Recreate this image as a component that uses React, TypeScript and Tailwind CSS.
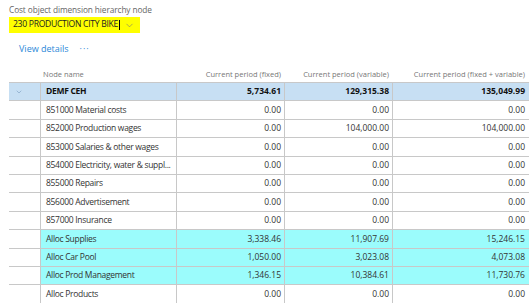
import { ChevronDown } from "lucide-react";

type Row = {
  name: string;
  fixed: string;
  variable: string;
  total: string;
  kind?: "parent" | "alloc";
};

const rows: Row[] = [
  { name: "DEMF CEH", fixed: "5,734.61", variable: "129,315.38", total: "135,049.99", kind: "parent" },
  { name: "851000 Material costs", fixed: "0.00", variable: "0.00", total: "0.00" },
  { name: "852000 Production wages", fixed: "0.00", variable: "104,000.00", total: "104,000.00" },
  { name: "853000 Salaries & other wages", fixed: "0.00", variable: "0.00", total: "0.00" },
  { name: "854000 Electricity, water & suppl...", fixed: "0.00", variable: "0.00", total: "0.00" },
  { name: "855000 Repairs", fixed: "0.00", variable: "0.00", total: "0.00" },
  { name: "856000 Advertisement", fixed: "0.00", variable: "0.00", total: "0.00" },
  { name: "857000 Insurance", fixed: "0.00", variable: "0.00", total: "0.00" },
  { name: "Alloc Supplies", fixed: "3,338.46", variable: "11,907.69", total: "15,246.15", kind: "alloc" },
  { name: "Alloc Car Pool", fixed: "1,050.00", variable: "3,023.08", total: "4,073.08", kind: "alloc" },
  { name: "Alloc Prod Management", fixed: "1,346.15", variable: "10,384.61", total: "11,730.76", kind: "alloc" },
  { name: "Alloc Products", fixed: "0.00", variable: "0.00", total: "0.00" },
];

const cols = "grid grid-cols-[31px_136px_108px_108px_137px]";

export default function App() {
  return (
    <div className="w-[529px] h-[303px] overflow-hidden bg-white pl-[9px] font-['Open_Sans',sans-serif] text-[#333]">
      {/* Hierarchy node picker */}
      <div className="pt-[5px] text-[8.3px] leading-[10px] tracking-[-0.1px] text-[#666]">Cost object dimension hierarchy node</div>
      <div className="mt-[2px] flex h-[16px] w-[131px] items-center justify-between bg-[#ffff00] pl-[4px] pr-[5px]">
        <span className="whitespace-nowrap text-[8.6px] leading-none tracking-[-0.3px] text-[#222]">
          230 PRODUCTION CITY BIKE<span className="ml-px inline-block h-[10px] w-px bg-black align-middle" />
        </span>
        <ChevronDown className="h-[11px] w-[11px] shrink-0 text-[#777]" strokeWidth={1.3} />
      </div>

      {/* Action bar */}
      <div className="mt-[10px] flex items-center gap-[11px] pl-[10px] text-[9px] leading-[12px] text-[#2b88d8]">
        <span>View details</span>
        <span className="tracking-[1px]">···</span>
      </div>

      {/* Grid */}
      <div className="mt-[12px]">
        <div className={`${cols} h-[15px] items-center text-[7.5px] text-[#777]`}>
          <div />
          <div className="pl-[3px]">Node name</div>
          <div className="pr-[3px] text-right">Current period (fixed)</div>
          <div className="pr-[3px] text-right">Current period (variable)</div>
          <div className="pr-[4px] text-right">Current period (fixed + variable)</div>
        </div>
        <div className="border-t border-[#c8c8c8]">
          {rows.map((r) => {
            const bg = r.kind === "parent" ? "bg-[#c7dff3]" : r.kind === "alloc" ? "bg-[#9bfcfc]" : "bg-white";
            const weight = r.kind === "parent" ? "font-bold text-[#111]" : "";
            return (
              <div key={r.name} className={`${cols} h-[18.4px] border-b border-[#c8c8c8] text-[8.5px] leading-none ${weight}`}>
                <div className={`flex items-center pl-[6px] ${r.kind === "parent" ? bg : "bg-white"}`}>
                  {r.kind === "parent" && <ChevronDown className="h-[8px] w-[8px] text-[#6a8fb5]" strokeWidth={1.5} />}
                </div>
                <div className={`flex items-center overflow-hidden whitespace-nowrap border-l border-[#c8c8c8] pl-[5px] tracking-[-0.3px] ${bg}`}>
                  {r.name}
                </div>
                <div className={`flex items-center justify-end border-l border-[#c8c8c8] pr-[3px] ${bg}`}>{r.fixed}</div>
                <div className={`flex items-center justify-end border-l border-[#c8c8c8] pr-[3px] ${bg}`}>{r.variable}</div>
                <div className={`flex items-center justify-end border-l border-[#c8c8c8] pr-[4px] ${bg}`}>{r.total}</div>
              </div>
            );
          })}
        </div>
      </div>
    </div>
  );
}
